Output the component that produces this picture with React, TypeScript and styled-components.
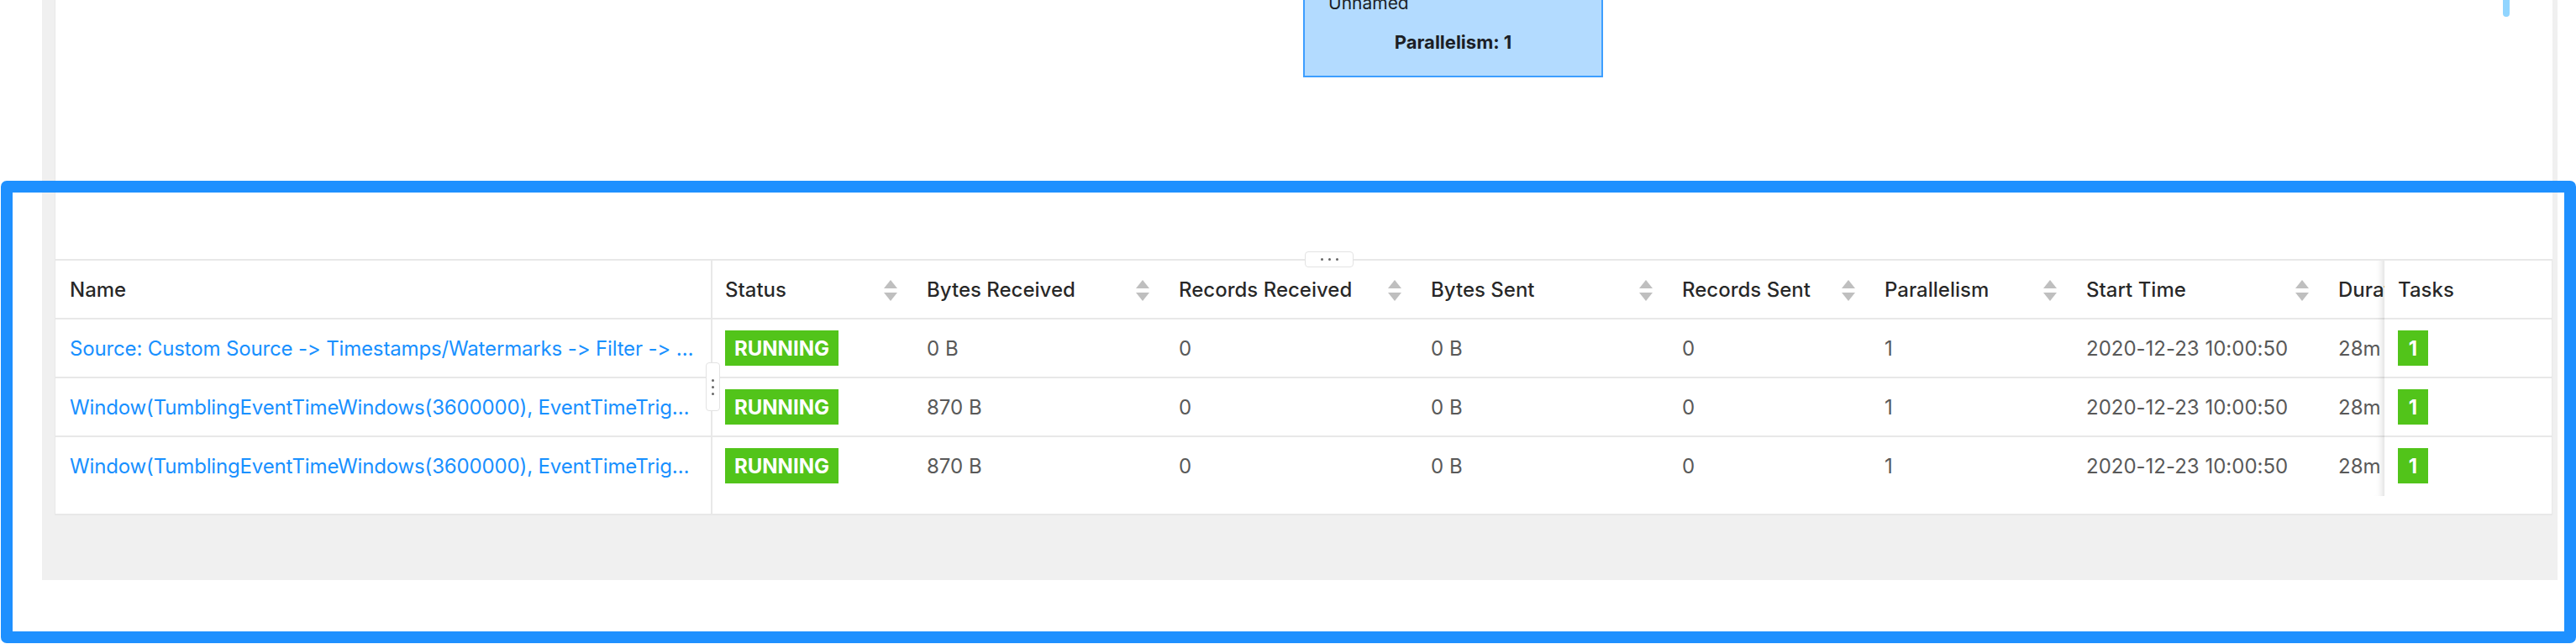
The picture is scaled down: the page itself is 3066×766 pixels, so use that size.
import React from 'react'
import styled, { createGlobalStyle } from 'styled-components'

type Vertex = {
  name: string
  status: string
  bytesReceived: string
  recordsReceived: string
  bytesSent: string
  recordsSent: string
  parallelism: number
  startTime: string
  duration: string
  tasks: number
}

type Column = { title: string; width: number; sortable: boolean }

const columns: Column[] = [
  { title: 'Name', width: 782, sortable: false },
  { title: 'Status', width: 240, sortable: true },
  { title: 'Bytes Received', width: 300, sortable: true },
  { title: 'Records Received', width: 300, sortable: true },
  { title: 'Bytes Sent', width: 299, sortable: true },
  { title: 'Records Sent', width: 241, sortable: true },
  { title: 'Parallelism', width: 240, sortable: true },
  { title: 'Start Time', width: 300, sortable: true },
  { title: 'Duration', width: 70, sortable: true },
  { title: 'Tasks', width: 199, sortable: false },
]

const gridColumns = columns.map((c) => `${c.width}px`).join(' ')

// names as the table shows them, already cut to the column width
const windowName = 'Window(TumblingEventTimeWindows(3600000), EventTimeTrig…'

const vertices: Vertex[] = [
  {
    name: 'Source: Custom Source -> Timestamps/Watermarks -> Filter -> …',
    status: 'RUNNING',
    bytesReceived: '0 B',
    recordsReceived: '0',
    bytesSent: '0 B',
    recordsSent: '0',
    parallelism: 1,
    startTime: '2020-12-23 10:00:50',
    duration: '28m',
    tasks: 1,
  },
  {
    name: windowName,
    status: 'RUNNING',
    bytesReceived: '870 B',
    recordsReceived: '0',
    bytesSent: '0 B',
    recordsSent: '0',
    parallelism: 1,
    startTime: '2020-12-23 10:00:50',
    duration: '28m',
    tasks: 1,
  },
  {
    name: windowName,
    status: 'RUNNING',
    bytesReceived: '870 B',
    recordsReceived: '0',
    bytesSent: '0 B',
    recordsSent: '0',
    parallelism: 1,
    startTime: '2020-12-23 10:00:50',
    duration: '28m',
    tasks: 1,
  },
]

const GlobalStyle = createGlobalStyle`
  html, body {
    margin: 0;
    padding: 0;
    background: #ffffff;
  }
  body {
    font-family: Inter, "Noto Sans", "Liberation Sans", sans-serif;
    font-feature-settings: 'calt' 0, 'liga' 0;
    font-variant-ligatures: none;
    -webkit-font-smoothing: antialiased;
  }
  * {
    box-sizing: border-box;
  }
`

export default function App() {
  return (
    <Page>
      <GlobalStyle />
      <Layout>
        <Panel>
          <GraphCanvas>
            <Node style={{ left: 1485, top: -58 }}>
              <NodeTitle>Unnamed</NodeTitle>
              <NodeParallelism>Parallelism: 1</NodeParallelism>
            </Node>
            <ScrollThumb />
          </GraphCanvas>

          <Table>
            <RowResizer>
              <Dot />
              <Dot />
              <Dot />
            </RowResizer>
            <ColResizer>
              <Dot />
              <Dot />
              <Dot />
            </ColResizer>

            <Row bordered>
              {columns.map((col, i) => (
                <HeaderCell key={col.title} first={i === 0} fixed={col.title === 'Tasks'}>
                  <HeaderLabel>{col.title}</HeaderLabel>
                  {col.sortable && <Sorter />}
                </HeaderCell>
              ))}
            </Row>

            {vertices.map((v, i) => (
              <Row key={i} bordered={i < vertices.length - 1}>
                <Cell first>
                  <NameLink>{v.name}</NameLink>
                </Cell>
                <Cell>
                  <StatusTag>{v.status}</StatusTag>
                </Cell>
                <Cell>{v.bytesReceived}</Cell>
                <Cell>{v.recordsReceived}</Cell>
                <Cell>{v.bytesSent}</Cell>
                <Cell>{v.recordsSent}</Cell>
                <Cell>{v.parallelism}</Cell>
                <Cell>{v.startTime}</Cell>
                <Cell>{v.duration}</Cell>
                <Cell fixed>
                  <CountTag>{v.tasks}</CountTag>
                </Cell>
              </Row>
            ))}

            <ScrollRow>
              <ScrollRowName />
            </ScrollRow>
          </Table>
        </Panel>
      </Layout>
      <Highlight />
    </Page>
  )
}

const Sorter = () => (
  <SorterBox>
    <svg width="16" height="10" viewBox="0 0 16 10">
      <polygon points="8,0 16,10 0,10" fill="#bfbfbf" />
    </svg>
    <svg width="16" height="10" viewBox="0 0 16 10">
      <polygon points="0,0 16,0 8,10" fill="#bfbfbf" />
    </svg>
  </SorterBox>
)

type CellProps = { first?: boolean; fixed?: boolean }
type RowProps = { bordered?: boolean }

const Page = styled.div`
  position: relative;
  width: 3066px;
  height: 766px;
  overflow: hidden;
  background: #ffffff;
`

const Layout = styled.div`
  margin-left: 50px;
  width: 2994px;
  height: 690px;
  padding: 0 6px 0 15px;
  background: #f0f0f0;
`

const Panel = styled.div`
  display: flex;
  flex-direction: column;
  width: 2973px;
  background: #ffffff;
`

const GraphCanvas = styled.div`
  position: relative;
  height: 308px;
  overflow: hidden;
  border-left: 1px solid #e8e8e8;
`

const Node = styled.div`
  position: absolute;
  width: 357px;
  height: 150px;
  display: flex;
  flex-direction: column;
  justify-content: flex-end;
  padding: 0 28px 27px;
  background: #b3dbff;
  border: 2px solid #3d9eff;
  color: #1c1f26;
  font-size: 21px;
  line-height: 25px;
`

const NodeTitle = styled.div`
  margin-bottom: 22px;
`

const NodeParallelism = styled.div`
  text-align: center;
  font-size: 22px;
  font-weight: 700;
`

const ScrollThumb = styled.div`
  position: absolute;
  top: 0;
  left: 2913px;
  width: 8px;
  height: 20px;
  border-radius: 0 0 4px 4px;
  background: #91d5ff;
`

const Table = styled.div`
  position: relative;
  border-top: 2px solid #e8e8e8;
  border-bottom: 2px solid #e8e8e8;
  border-left: 1px solid #e8e8e8;
  border-right: 1px solid #e8e8e8;
  font-size: 24px;
`

const Row = styled.div<RowProps>`
  display: grid;
  grid-template-columns: ${gridColumns};
  height: ${(p) => (p.bordered ? '70px' : '68px')};
  border-bottom: ${(p) => (p.bordered ? '2px solid #e8e8e8' : 'none')};
`

const Cell = styled.div<CellProps>`
  position: ${(p) => (p.fixed ? 'relative' : 'static')};
  display: flex;
  align-items: center;
  min-width: 0;
  padding: 0 ${(p) => (p.first ? '6px' : '15px')} 0 ${(p) => (p.first ? '17px' : p.fixed ? '16px' : '15px')};
  overflow: ${(p) => (p.fixed ? 'visible' : 'hidden')};
  white-space: nowrap;
  background: #ffffff;
  color: #595959;
  border-right: ${(p) => (p.first ? '2px solid #e8e8e8' : 'none')};

  &::before {
    content: ${(p) => (p.fixed ? "''" : 'none')};
    position: absolute;
    top: 0;
    bottom: -2px;
    left: -30px;
    width: 30px;
    box-shadow: inset -10px 0 8px -8px rgba(0, 0, 0, 0.15);
    pointer-events: none;
  }
`

const HeaderCell = styled(Cell)`
  justify-content: space-between;
  padding-right: 20px;
  color: rgba(0, 0, 0, 0.85);
  font-weight: 500;
`

const HeaderLabel = styled.span`
  flex-shrink: 0;
`

const SorterBox = styled.span`
  display: flex;
  flex-direction: column;
  gap: 5px;
  flex-shrink: 0;
  margin-top: 2px;
`

const NameLink = styled.span`
  display: block;
  overflow: hidden;
  text-overflow: ellipsis;
  letter-spacing: -0.15px;
  color: #1890ff;
`

const StatusTag = styled.span`
  display: inline-flex;
  align-items: center;
  height: 42px;
  padding: 0 11px;
  background: #52c41a;
  color: #ffffff;
  font-weight: 700;
`

const CountTag = styled(StatusTag)`
  width: 36px;
  padding: 0;
  justify-content: center;
`

const ScrollRow = styled.div`
  display: grid;
  grid-template-columns: ${gridColumns};
  height: 23px;
`

const ScrollRowName = styled.div`
  border-right: 2px solid #e8e8e8;
`

const RowResizer = styled.div`
  position: absolute;
  top: -11px;
  left: 1487px;
  z-index: 2;
  width: 58px;
  height: 19px;
  display: flex;
  align-items: center;
  justify-content: center;
  gap: 6px;
  background: #ffffff;
  border: 1.5px solid #e3e3e3;
  border-radius: 4px;
`

const ColResizer = styled(RowResizer)`
  top: 121px;
  left: 774px;
  width: 17px;
  height: 58px;
  flex-direction: column;
  gap: 5px;
`

const Dot = styled.span`
  width: 3px;
  height: 3px;
  border-radius: 50%;
  background: #666666;
`

const Highlight = styled.div`
  position: absolute;
  left: 1px;
  top: 215px;
  width: 3065px;
  height: 550px;
  border: 14px solid #1e90ff;
  border-radius: 7px;
  pointer-events: none;
`
